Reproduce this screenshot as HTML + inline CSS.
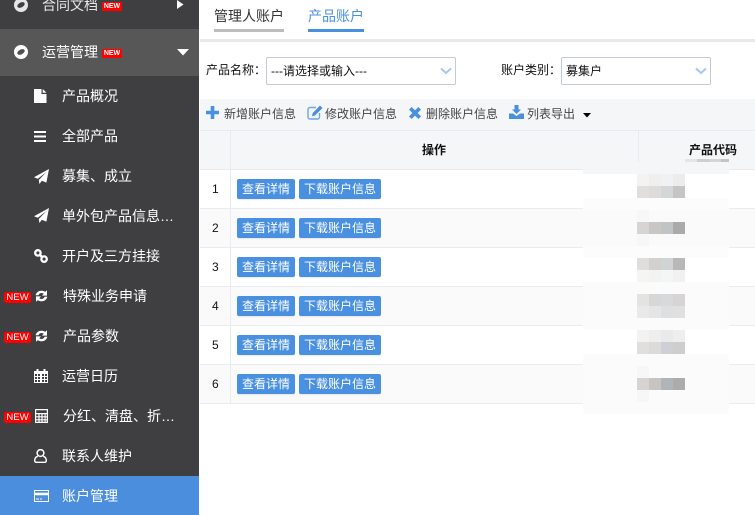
<!DOCTYPE html>
<html lang="zh"><head><meta charset="utf-8">
<style>
*{box-sizing:border-box}
html,body{margin:0;padding:0;width:755px;height:515px;overflow:hidden;background:#fff;font-family:"Liberation Sans","Noto Sans CJK SC",sans-serif}
.a{position:absolute}
#root{position:relative;width:755px;height:515px;overflow:hidden}
.t{position:absolute;white-space:nowrap;line-height:20px;height:20px}
.m{color:#fff;font-size:14px;left:62px}
.s{color:#111;font-size:12px}
.tb{color:#444;font-size:12px}
.new{position:absolute;left:4px;width:27px;height:11px;background:#f00;border-radius:2px;color:#fff;font:9.5px/11px "Liberation Sans",sans-serif;text-align:center}
.new2{position:absolute;left:102px;width:20px;height:9px;background:#f00;color:#fff;font:bold 7px/9px "Liberation Sans",sans-serif;text-align:center}
.btn{position:absolute;height:20px;background:#4a90e0;border-radius:2px;color:#fff;font-size:12px;line-height:20px;text-align:center;white-space:nowrap;box-shadow:0 1px 1px rgba(0,0,0,.08)}
.sel{position:absolute;top:57px;height:28px;border:1px solid #c2cad6;border-radius:2px;background:#fff;font-size:12px;line-height:26px;padding-left:4px;color:#111}
.h{position:absolute;height:1px;left:200px;width:555px;background:#e8ebef}
.v{position:absolute;width:1px;background:#e8ebef}
.b{position:absolute;width:12px;height:12px}
svg{position:absolute;display:block}
</style></head><body><div id="root">

<div class="a" style="left:0;top:0;width:199px;height:515px;background:#3f3f41"></div>
<div class="a" style="left:0;top:29px;width:199px;height:47px;background:#575757"></div>
<div class="a" style="left:0;top:476px;width:199px;height:39px;background:#4a8edd"></div>

<svg style="left:14px;top:-2px" width="14" height="14" viewBox="0 0 14 14"><circle cx="7" cy="7" r="7" fill="#e6e6e6"/><ellipse cx="7" cy="7" rx="4" ry="2.4" transform="rotate(-28 7 7)" fill="#3f3f41"/></svg>
<div class="t m" style="left:42px;top:-5px;color:#e8e8e8">合同文档</div>
<div class="new2" style="top:2px">NEW</div>
<svg style="left:177px;top:0" width="7" height="10"><path d="M0 0L6.5 4.5L0 9Z" fill="#fff"/></svg>

<svg style="left:14px;top:45px" width="14" height="14" viewBox="0 0 14 14"><circle cx="7" cy="7" r="7" fill="#fff"/><ellipse cx="7" cy="7" rx="4" ry="2.4" transform="rotate(-28 7 7)" fill="#505050"/></svg>
<div class="t m" style="left:42px;top:42px">运营管理</div>
<div class="new2" style="top:49px">NEW</div>
<svg style="left:177px;top:49px" width="12" height="7"><path d="M0 0H12L6 6.5Z" fill="#fff"/></svg>

<svg style="left:34px;top:89px" width="13" height="14"><path d="M0 0H7.5V5H12.5V14H0ZM8.7 0L12.5 3.8H8.7Z" fill="#fff"/></svg>
<div class="t m" style="top:86px">产品概况</div>

<svg style="left:34px;top:131px" width="12" height="11"><path d="M0 0H12V2H0ZM0 4.5H12V6.5H0ZM0 9H12V11H0Z" fill="#fff"/></svg>
<div class="t m" style="top:126px">全部产品</div>

<svg style="left:34px;top:169px" width="15" height="15" viewBox="0 0 15 15"><path d="M15 0L12.4 13.6L7.8 11.8L5.4 15L4.8 11L12.5 3L3.8 9.8L0 8.2Z" fill="#fff"/></svg>
<div class="t m" style="top:166px">募集、成立</div>

<svg style="left:34px;top:208px" width="15" height="15" viewBox="0 0 15 15"><path d="M15 0L12.4 13.6L7.8 11.8L5.4 15L4.8 11L12.5 3L3.8 9.8L0 8.2Z" fill="#fff"/></svg>
<div class="t m" style="top:206px">单外包产品信息…</div>

<svg style="left:34px;top:249px" width="14" height="14" viewBox="0 0 14 14"><circle cx="3.9" cy="3.9" r="2.7" fill="none" stroke="#fff" stroke-width="2.3"/><circle cx="10.1" cy="10.1" r="2.7" fill="none" stroke="#fff" stroke-width="2.3"/><path d="M5.5 5.5L8.5 8.5" stroke="#fff" stroke-width="2.4"/></svg>
<div class="t m" style="top:246px">开户及三方挂接</div>

<div class="new" style="top:292px">NEW</div>
<svg style="left:35px;top:290px" width="13" height="12" viewBox="0 0 13 12"><path d="M0.6 5.2A6 5.6 0 0 1 10.2 1.9L12 .2V5.600H7L8.7 3.800A3.300 3.300 0 0 0 3.500 5.200ZM12.400 6.800A6 5.600 0 0 1 2.800 10.100L1 11.800V6.400H6L4.300 8.200A3.300 3.300 0 0 0 9.500 6.800Z" fill="#fff"/></svg>
<div class="t m" style="left:63px;top:286px">特殊业务申请</div>

<div class="new" style="top:332px">NEW</div>
<svg style="left:35px;top:330px" width="13" height="12" viewBox="0 0 13 12"><path d="M0.6 5.2A6 5.6 0 0 1 10.2 1.9L12 .2V5.600H7L8.7 3.800A3.300 3.300 0 0 0 3.500 5.200ZM12.400 6.800A6 5.600 0 0 1 2.800 10.100L1 11.800V6.400H6L4.300 8.200A3.300 3.300 0 0 0 9.500 6.800Z" fill="#fff"/></svg>
<div class="t m" style="left:63px;top:326px">产品参数</div>

<svg style="left:34px;top:369px" width="14" height="14" viewBox="0 0 14 14"><path d="M0 2H2.5V0H4.500V2H9.500V0H11.500V2H14V14H0ZM1 5V7H3V5ZM4 5V7H6V5ZM8 5V7H10V5ZM11 5V7H13V5ZM1 8V10H3V8ZM4 8V10H6V8ZM8 8V10H10V8ZM11 8V10H13V8ZM1 11V13H3V11ZM4 11V13H6V11ZM8 11V13H10V11ZM11 11V13H13V11Z" fill="#fff" fill-rule="evenodd"/></svg>
<div class="t m" style="top:366px">运营日历</div>

<div class="new" style="top:412px">NEW</div>
<svg style="left:35px;top:409px" width="13" height="14" viewBox="0 0 13 14"><path d="M0 0H13V14H0ZM1.200 1.200V4H11.800V1.200ZM1.200 5.200V7.200H3.400V5.200ZM4.600 5.200V7.200H6.400V5.200ZM7.600 5.200V7.200H9.600V5.200ZM10.600 5.200V7.200H11.800V5.200ZM1.200 8.400V10.200H3.400V8.400ZM4.600 8.400V10.200H6.400V8.400ZM7.600 8.400V10.200H9.600V8.400ZM10.600 8.400V10.200H11.800V8.400ZM1.200 11.400V12.800H3.400V11.400ZM4.600 11.400V12.800H6.400V11.400ZM7.600 11.400V12.800H9.600V11.400ZM10.600 11.400V12.800H11.800V11.400Z" fill="#fff" fill-rule="evenodd"/></svg>
<div class="t m" style="left:63px;top:406px">分红、清盘、折…</div>

<svg style="left:34px;top:449px" width="13" height="14" viewBox="0 0 13 14"><circle cx="6.500" cy="4" r="3.400" fill="none" stroke="#fff" stroke-width="1.500"/><path d="M3.800 7.200C1.600 8 .7 9.600 .7 11.600C.7 12.800 1.400 13.300 2.400 13.300H10.600C11.600 13.300 12.300 12.800 12.300 11.600C12.300 9.600 11.400 8 9.200 7.200" fill="none" stroke="#fff" stroke-width="1.400"/></svg>
<div class="t m" style="top:446px">联系人维护</div>

<svg style="left:34px;top:490px" width="15" height="12" viewBox="0 0 15 12"><path d="M0 0H15V12H0ZM1 1V2.800H14V1ZM1 5.200V11H14V5.200ZM2 8.500H5V9.500H2ZM6 8.500H8V9.500H6Z" fill="#fff" fill-rule="evenodd"/></svg>
<div class="t m" style="top:486px">账户管理</div>

<!-- tabs -->
<div class="t" style="left:214px;top:6px;font-size:14px;color:#333">管理人账户</div>
<div class="a" style="left:214px;top:29px;width:70px;height:3px;background:#bdbdbd"></div>
<div class="t" style="left:308px;top:6px;font-size:14px;color:#4a90e0">产品账户</div>
<div class="a" style="left:308px;top:29px;width:56px;height:3px;background:#4a90e0"></div>
<div class="a" style="left:200px;top:39px;width:555px;height:3px;background:#e8e9eb"></div>

<!-- filters -->
<div class="t s" style="left:206px;top:60px">产品名称：</div>
<div class="sel" style="left:266px;width:190px">---请选择或输入---</div>
<svg style="left:440px;top:67px" width="12" height="8"><path d="M1 1.500L6 6L11 1.500" fill="none" stroke="#a6c8f0" stroke-width="2"/></svg>
<div class="t s" style="left:501px;top:60px">账户类别：</div>
<div class="sel" style="left:561px;width:150px">募集户</div>
<svg style="left:695px;top:67px" width="12" height="8"><path d="M1 1.500L6 6L11 1.500" fill="none" stroke="#a6c8f0" stroke-width="2"/></svg>

<!-- toolbar -->
<div class="a" style="left:200px;top:99px;width:555px;height:32px;background:#f5f6f8"></div>
<svg style="left:206px;top:106px" width="13" height="13"><path d="M4.700 0H8.300V4.700H13V8.300H8.300V13H4.700V8.300H0V4.700H4.700Z" fill="#4a90e0"/></svg>
<div class="t tb" style="left:224px;top:104px">新增账户信息</div>
<svg style="left:307px;top:105px" width="16" height="15" viewBox="0 0 16 15"><path d="M9 2.500H3A2 2 0 0 0 1 4.500V12A2 2 0 0 0 3 14H10.500A2 2 0 0 0 12.500 12V8" fill="none" stroke="#6ea6e6" stroke-width="1.400"/><path d="M13 .5L15.500 3L8 10.500L5 11.300L5.700 8Z" fill="#4a90e0"/></svg>
<div class="t tb" style="left:325px;top:104px">修改账户信息</div>
<svg style="left:409px;top:107px" width="12" height="12"><path d="M2.600 0L6 3.400L9.400 0L12 2.600L8.600 6L12 9.400L9.400 12L6 8.600L2.600 12L0 9.400L3.400 6L0 2.600Z" fill="#4a90e0"/></svg>
<div class="t tb" style="left:426px;top:104px">删除账户信息</div>
<svg style="left:509px;top:105px" width="15" height="14" viewBox="0 0 15 14"><path d="M5.500 0H9.500V4.500H12L7.500 9L3 4.500H5.500Z" fill="#4a90e0"/><path d="M0 8.500H4L7.500 11L11 8.500H15V14H0Z" fill="#4a90e0"/></svg>
<div class="t tb" style="left:527px;top:104px">列表导出</div>
<svg style="left:583px;top:113px" width="8" height="5"><path d="M0 0H8L4 4.500Z" fill="#000"/></svg>

<!-- table -->
<div class="a" style="left:200px;top:131px;width:555px;height:38px;background:#f5f6f8"></div>
<div class="a" style="left:200px;top:209px;width:555px;height:38px;background:#fafafa"></div>
<div class="a" style="left:200px;top:287px;width:555px;height:38px;background:#fafafa"></div>
<div class="a" style="left:200px;top:365px;width:555px;height:38px;background:#fafafa"></div>
<div class="h" style="top:130px"></div><div class="h" style="top:169px"></div><div class="h" style="top:208px"></div><div class="h" style="top:247px"></div><div class="h" style="top:286px"></div><div class="h" style="top:325px"></div><div class="h" style="top:364px"></div><div class="h" style="top:403px"></div>
<div class="v" style="left:230px;top:131px;height:272px"></div>
<div class="v" style="left:638px;top:131px;height:38px"></div>
<div class="t" style="left:422px;top:140px;font-size:12px;font-weight:bold;color:#111">操作</div>
<div class="t" style="left:689px;top:140px;font-size:12px;font-weight:bold;color:#111">产品代码</div>

<div class="t s" style="left:212px;top:179px;font-size:12px">1</div>
<div class="t s" style="left:212px;top:218px;font-size:12px">2</div>
<div class="t s" style="left:212px;top:257px;font-size:12px">3</div>
<div class="t s" style="left:212px;top:296px;font-size:12px">4</div>
<div class="t s" style="left:212px;top:335px;font-size:12px">5</div>
<div class="t s" style="left:212px;top:374px;font-size:12px">6</div>

<div class="btn" style="left:237px;top:179px;width:58px">查看详情</div><div class="btn" style="left:299px;top:179px;width:82px">下载账户信息</div>
<div class="btn" style="left:237px;top:218px;width:58px">查看详情</div><div class="btn" style="left:299px;top:218px;width:82px">下载账户信息</div>
<div class="btn" style="left:237px;top:257px;width:58px">查看详情</div><div class="btn" style="left:299px;top:257px;width:82px">下载账户信息</div>
<div class="btn" style="left:237px;top:296px;width:58px">查看详情</div><div class="btn" style="left:299px;top:296px;width:82px">下载账户信息</div>
<div class="btn" style="left:237px;top:335px;width:58px">查看详情</div><div class="btn" style="left:299px;top:335px;width:82px">下载账户信息</div>
<div class="btn" style="left:237px;top:374px;width:58px">查看详情</div><div class="btn" style="left:299px;top:374px;width:82px">下载账户信息</div>

<!-- mosaic washes -->
<div class="a" style="left:583px;top:162px;width:146px;height:12px;background:#f5f6f8"></div>
<div class="a" style="left:583px;top:174px;width:146px;height:24px;background:#fff"></div>
<div class="a" style="left:583px;top:198px;width:146px;height:12px;background:#fcfcfc"></div>
<div class="a" style="left:583px;top:210px;width:146px;height:36px;background:#fafafa"></div>
<div class="a" style="left:583px;top:246px;width:146px;height:12px;background:#fcfcfc"></div>
<div class="a" style="left:583px;top:258px;width:146px;height:24px;background:#fff"></div>
<div class="a" style="left:583px;top:282px;width:146px;height:48px;background:#fbfbfb"></div>
<div class="a" style="left:583px;top:330px;width:146px;height:24px;background:#fff"></div>
<div class="a" style="left:583px;top:354px;width:146px;height:60px;background:#fbfbfb"></div>

<div class="a" style="left:685px;top:159px;width:12px;height:3px;background:#e5e5e5"></div>
<div class="a" style="left:697px;top:159px;width:12px;height:3px;background:#cfcfcf"></div>
<div class="a" style="left:709px;top:159px;width:12px;height:3px;background:#d5d5d5"></div>
<div class="a" style="left:721px;top:159px;width:8px;height:3px;background:#c4c4c4"></div>

<div class="b" style="left:637px;top:174px;background:#f5f3f1"></div><div class="b" style="left:649px;top:174px;background:#efefef"></div><div class="b" style="left:661px;top:174px;background:#f0f1f2"></div><div class="b" style="left:673px;top:174px;background:#ececec"></div>
<div class="b" style="left:637px;top:186px;background:#e0dfdd"></div><div class="b" style="left:649px;top:186px;background:#dddcda"></div><div class="b" style="left:661px;top:186px;background:#d4d7d8"></div><div class="b" style="left:673px;top:186px;background:#c5c5c5"></div>
<div class="b" style="left:637px;top:210px;background:#f7f7f7"></div>
<div class="b" style="left:637px;top:222px;background:#d6d5d3"></div><div class="b" style="left:649px;top:222px;background:#c8c7c5"></div><div class="b" style="left:661px;top:222px;background:#c0c4c4"></div><div class="b" style="left:673px;top:222px;background:#aaaaaa"></div>
<div class="b" style="left:637px;top:234px;background:#f7f7f7"></div>
<div class="b" style="left:637px;top:258px;background:#dfdedc"></div><div class="b" style="left:649px;top:258px;background:#d2d1cf"></div><div class="b" style="left:661px;top:258px;background:#d1d4d5"></div><div class="b" style="left:673px;top:258px;background:#b9b7b8"></div>
<div class="b" style="left:637px;top:270px;background:#f6f5f3"></div><div class="b" style="left:649px;top:270px;background:#f3f3f3"></div><div class="b" style="left:661px;top:270px;background:#f4f6f5"></div><div class="b" style="left:673px;top:270px;background:#f1f1f1"></div>
<div class="b" style="left:637px;top:294px;background:#e4e3e1"></div><div class="b" style="left:649px;top:294px;background:#d7d7d7"></div><div class="b" style="left:661px;top:294px;background:#d7d9da"></div><div class="b" style="left:673px;top:294px;background:#d6d4d5"></div>
<div class="b" style="left:637px;top:306px;background:#e9e9e9"></div><div class="b" style="left:649px;top:306px;background:#e5e5e5"></div><div class="b" style="left:661px;top:306px;background:#dddfe0"></div><div class="b" style="left:673px;top:306px;background:#e0e0e0"></div>
<div class="b" style="left:637px;top:330px;background:#f4f2f0"></div><div class="b" style="left:649px;top:330px;background:#eeeeee"></div><div class="b" style="left:661px;top:330px;background:#e9eaec"></div><div class="b" style="left:673px;top:330px;background:#eeeeee"></div>
<div class="b" style="left:637px;top:342px;background:#e0dfdd"></div><div class="b" style="left:649px;top:342px;background:#dcdbd9"></div><div class="b" style="left:661px;top:342px;background:#cdd0d5"></div><div class="b" style="left:673px;top:342px;background:#cfcdce"></div>
<div class="b" style="left:637px;top:366px;background:#f7f7f7"></div>
<div class="b" style="left:637px;top:378px;background:#d5d4d2"></div><div class="b" style="left:649px;top:378px;background:#c6c5c3"></div><div class="b" style="left:661px;top:378px;background:#b1b5b8"></div><div class="b" style="left:673px;top:378px;background:#adabac"></div>
<div class="b" style="left:637px;top:390px;background:#f7f7f7"></div>

</div></body></html>
